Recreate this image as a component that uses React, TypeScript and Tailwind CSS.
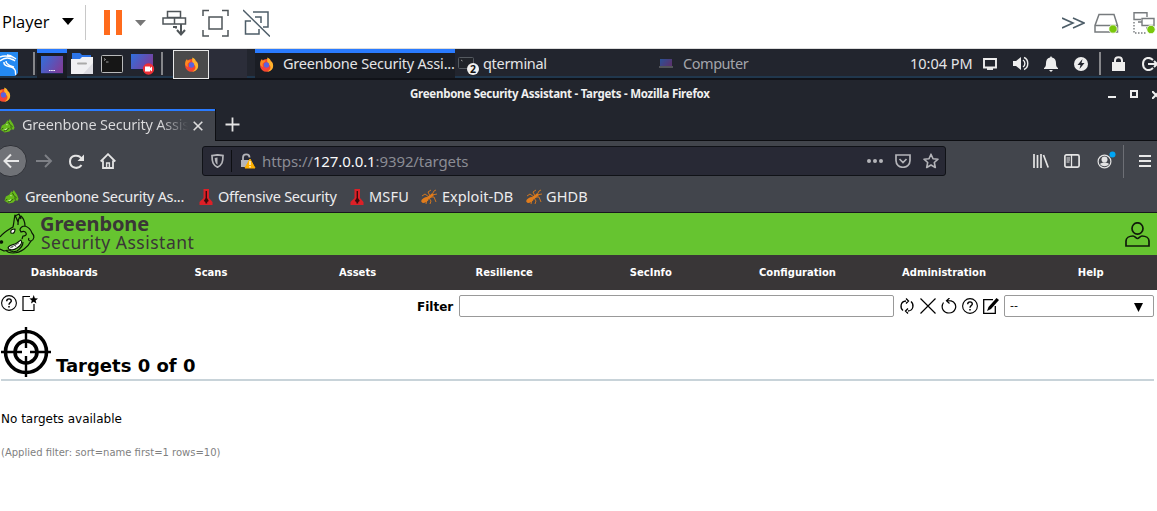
import type { ReactNode } from 'react';

type CellProps = { className: string; children?: ReactNode };

function Cell({ className, children }: CellProps) {
  return <div className={`flex shrink-0 items-center whitespace-nowrap ${className}`}>{children}</div>;
}

function Firefox({ className }: { className: string }) {
  return (
    <svg className={className} viewBox="0 0 16 16">
      <circle cx="8" cy="9" r="6.800" fill="#f4472f" />
      <path d="M9 .5c3 1.500 3.500 3 3.500 4 1.500.5 2.600 2.500 2.600 4.700 0 3.800-3 6.300-6.500 6.300 4-1.500 4.500-5 2.500-7C9.500 7 8 5 9 .5z" fill="#ffb32c" />
      <path d="M1.200 8C1 5 2 3 3.200 2c.1 1 .5 1.500 1 2 1-.5 2-.6 3 0L5 6c-1.500 1-1.500 3-.5 4.500C3 10.500 2 9.500 1.200 8z" fill="#ff8a1f" />
      <circle cx="8" cy="8.600" r="2.900" fill="#5a62e0" />
      <path d="M3.500 10c1.500 2 4 2.500 6 1.300L8 13c-2 .5-3.800-.8-4.500-3z" fill="#f23a5c" />
    </svg>
  );
}

function Dragon({ className }: { className: string }) {
  return (
    <svg className={className} viewBox="0 0 16 16">
      <path d="M.5 12.500L2 8l3.500-2L8 2.500l1 1L10.500 1l1.500 2.500 2 3 1.500 4-1 2-2.500-.5-2 2.500-5 1z" fill="#67bb1c" />
      <path d="M9 4l1.500 3 3 2.500M11.500 9l.5 2.500M4 14l3.500-1L10 10.500M1.500 12l2-1" stroke="#27420f" strokeWidth=".9" fill="none" />
      <path d="M6.500 6.500l1.800.5-.8 1zM3.500 12.500l2-.3 2-1.700-1 2.500z" fill="#e2f7cc" />
    </svg>
  );
}

function Dagger() {
  return (
    <svg className="h-4 w-[14px]" viewBox="0 0 14 16">
      <path d="M4.500 0h5.500v9l3.500 4v3H.5v-3l4-4z" fill="#dd2027" />
      <path d="M6.600 2h1.400v7l1.800 3-1.600 1v1.500H6.400V13l-1.600-1 1.800-3z" fill="#3b0b0d" />
    </svg>
  );
}

function Ant() {
  return (
    <svg className="h-4 w-4" viewBox="0 0 16 16">
      <g fill="#e07c1c">
        <ellipse cx="4" cy="11" rx="4" ry="2.400" transform="rotate(-30 4 11)" />
        <ellipse cx="8.500" cy="8" rx="2.700" ry="1.500" transform="rotate(-30 8.500 8)" />
        <circle cx="11" cy="6" r="1.600" />
      </g>
      <path d="M8 8L4 5 1 7M9 7L7 3l3-2M11 6l2-4 2-1M11 6l5-1M9 8l4 0 2 5M8 9l2 3-1 3M6 10l-1 5" stroke="#e07c1c" strokeWidth=".9" fill="none" />
    </svg>
  );
}

function Monitor({ className }: { className: string }) {
  return (
    <svg className={className} viewBox="0 0 22 18">
      <defs>
        <linearGradient id="screen" x1="0" y1="0" x2="1" y2=".5">
          <stop offset="0" stopColor="#2f70de" />
          <stop offset="1" stopColor="#7b3f9c" />
        </linearGradient>
      </defs>
      <rect width="22" height="18" fill="url(#screen)" />
      <path d="M0 17.500h22" stroke="#1c2a50" />
      <path d="M8 14.500h6" stroke="#fff" strokeWidth="1.200" strokeDasharray="1.500 .7" />
    </svg>
  );
}

function HelpMark() {
  return (
    <svg className="h-4 w-4 shrink-0" viewBox="0 0 16 16" fill="none" stroke="#000">
      <circle cx="8" cy="8" r="7.400" strokeWidth="1.100" />
      <path d="M5.700 6.200c0-3 4.600-3 4.600-.3 0 1.600-2.300 1.700-2.300 3.900" strokeWidth="1.400" />
      <path d="M8 11v1.500" strokeWidth="1.500" />
    </svg>
  );
}

function PlayerBar() {
  return (
    <div className="flex h-[49px] items-center border-b border-[#dcdcdc] bg-white pb-[3px] font-['Open_Sans',sans-serif]">
      <Cell className="w-[62px] pl-[2px] text-[16.500px] text-black">Player</Cell>
      <Cell className="w-[23px]">
        <svg className="mb-[3px] h-[7px] w-3" viewBox="0 0 12 7"><path d="M0 0h12L6 7z" /></svg>
      </Cell>
      <Cell className="w-[19px]"><div className="h-[35px] w-px bg-[#c8c8c8]" /></Cell>
      <Cell className="w-[31px] gap-[6px]">
        <div className="h-[25px] w-[6px] bg-[#ff6b1c]" />
        <div className="h-[25px] w-[6px] bg-[#ff6b1c]" />
      </Cell>
      <Cell className="w-[27px]">
        <svg className="h-[6px] w-[11px]" viewBox="0 0 11 6"><path d="M0 0h11L5.500 6z" fill="#777" /></svg>
      </Cell>
      <Cell className="w-10">
        <svg className="h-[26px] w-[26px]" viewBox="0 0 26 26" fill="none" stroke="#4f5559" strokeWidth="1.500">
          <path d="M5.500 1.500h13v6h-13zM1 8h22.500v6H1zM12.500 8v6" />
          <path d="M14 18.500v-1.500h-3M19 14v10M15 20l4 4.500 4-4.500" strokeWidth="2" />
        </svg>
      </Cell>
      <Cell className="w-[41px]">
        <svg className="h-[28px] w-[27px]" viewBox="0 0 27 28" fill="none" stroke="#4f5559" strokeWidth="1.500">
          <path d="M1 7V1.500h6M20 1.500h6V7M26 21v6h-6M7 27H1v-6" />
          <path d="M7 8h13v12H7z" />
        </svg>
      </Cell>
      <Cell className="w-[28px]">
        <svg className="h-[28px] w-[27px]" viewBox="0 0 27 28" fill="none" stroke="#4d5d68" strokeWidth="1.500">
          <path d="M10 3h15v15h-5M8 12H2.500v13H16v-5M12 8h6v6" />
          <path d="M0 1l27 26.500" />
        </svg>
      </Cell>
      <Cell className="ml-auto w-[32px]">
        <svg className="h-[12px] w-[23px]" viewBox="0 0 23 12" fill="none" stroke="#4d5d68" strokeWidth="1.600">
          <path d="M0 1l11 5-11 5M11 1l11 5-11 5" />
        </svg>
      </Cell>
      <Cell className="w-[39px]">
        <svg className="h-[22px] w-[25px]" viewBox="0 0 25 22" fill="none" stroke="#777b7e" strokeWidth="1.500">
          <path d="M5 2.500h15l3.500 11V20H1v-6.500zM1 13.500h22" />
          <circle cx="19" cy="17" r="4.200" fill="#7ac70c" stroke="#fff" strokeWidth=".8" />
        </svg>
      </Cell>
      <Cell className="w-[24px]">
        <svg className="h-[24px] w-[24px]" viewBox="0 0 24 24" fill="none" stroke="#777b7e" strokeWidth="1.400">
          <path d="M8 8.500H1V1.700h13V6M5 11h4" />
          <path d="M9 7.500h12v7H9zM13 17h5" fill="#fff" />
          <path d="M1 11v11h13" strokeDasharray="1.500 1.500" />
          <circle cx="18" cy="18.500" r="4.200" fill="#7ac70c" stroke="#fff" strokeWidth=".8" />
        </svg>
      </Cell>
    </div>
  );
}

function Panel() {
  return (
    <div className="flex h-[31px] border-b-2 border-[#101218] bg-[linear-gradient(#22252e_27px,#20374d_27px)] text-[#e4e4e6]">
      <Cell className="w-[33px]">
        <svg className="mt-[1px] h-[24px] w-[18px]" viewBox="0 0 18 24">
          <path d="M0 0h18v21l-3 3H0z" fill="#2389f2" />
          <path d="M0 5c4-2 8-1 13 0M0 9c5-4 10-3 13-1M7 3c4 0 6 2 9 4M4 10c-1 6 9 3 11 8 1 2 0 4 1 5M6 9c0 4 5 5 8 6M11 7c2 0 3 1 4 2" stroke="#fff" strokeWidth="1.400" fill="none" />
        </svg>
      </Cell>
      <Cell className="w-1"><div className="h-[23px] w-[1.500px] bg-[#85868a]" /></Cell>
      <Cell className="w-[30px] justify-center border-t-4 border-[#2a7bff] bg-[#1a1d24] pb-[1px]"><Monitor className="h-[18px] w-[22px]" /></Cell>
      <Cell className="w-[34px] pl-1">
        <svg className="h-[21px] w-[22px]" viewBox="0 0 22 21">
          <path d="M1 0h8l2 2h9v10H1z" fill="#2c74e8" />
          <path d="M0 6h9l2-2h11v17H0z" fill="#f0f0f3" />
          <path d="M12 21L22 10v11z" fill="#dcdce2" />
          <path d="M7 10.500h8" stroke="#aaa" strokeWidth="2" strokeLinecap="round" />
        </svg>
      </Cell>
      <Cell className="w-[30px]">
        <svg className="h-[18px] w-[22px]" viewBox="0 0 22 18">
          <rect x=".5" y=".5" width="21" height="17" rx="1" fill="#161616" stroke="#b9babb" />
          <path d="M3 3.500l1.500 1L3 5.500M5 7h2.500" stroke="#aaa" fill="none" strokeWidth=".9" />
        </svg>
      </Cell>
      <Cell className="w-[30px]">
        <svg className="mt-[2px] h-[21px] w-[24px]" viewBox="0 0 24 21">
          <rect width="22" height="16" fill="url(#screen)" />
          <path d="M0 15.500h22" stroke="#18233f" />
          <circle cx="17.500" cy="15" r="5.700" fill="#ed2f35" />
          <path d="M14 12.500h5v1.500l2-1.500v5l-2-1.500v1.500h-5z" fill="#fff" />
        </svg>
      </Cell>
      <Cell className="w-3"><div className="h-[23px] w-[1.500px] bg-[#85868a]" /></Cell>
      <Cell className="mt-px h-[29px] w-9 justify-center border border-[#e8e8e8] bg-[#4a4a4b]"><Firefox className="h-[15px] w-[15px]" /></Cell>
      <Cell className="w-[38px] bg-[#2b2d39]" />
      <Cell className="w-2" />
      <Cell className="w-[203px] bg-[linear-gradient(#1a1d24,#1a1d24)] bg-[length:200px_100%] bg-no-repeat">
        <div className="flex h-full w-[200px] items-center border-t-4 border-[#2a7bff] pb-[3px] pl-1">
          <Firefox className="h-[15px] w-[15px]" />
          <span className="ml-[9px] w-[172px] shrink-0 text-[14.500px] tracking-[-0.2px]">Greenbone Security Assi...</span>
        </div>
      </Cell>
      <Cell className="w-[25px]">
        <svg className="mt-[5px] h-[20px] w-[21px]" viewBox="0 0 21 20">
          <rect x=".5" y="1.500" width="15" height="11" rx="1" fill="#202329" stroke="#555a60" />
          <path d="M3 4l1.500 1" stroke="#999" />
          <circle cx="15" cy="13" r="6" fill="#f0f0f0" />
          <text x="15" y="16.800" textAnchor="middle" fontSize="10.500" fontWeight="700" fill="#111">2</text>
        </svg>
      </Cell>
      <Cell className="w-[176px] pt-px text-[14.500px] tracking-[-0.3px]">qterminal</Cell>
      <Cell className="w-[24px] opacity-60">
        <svg className="h-[9px] w-[14px]" viewBox="0 0 14 9"><path d="M1 0h12v7H1z" fill="url(#screen)" /><path d="M0 8h14" stroke="#aaa" strokeWidth="1.200" /></svg>
      </Cell>
      <Cell className="pt-px text-[14.500px] tracking-[-0.45px] text-[#a2a4aa]">Computer</Cell>
      <Cell className="ml-auto w-[73px] pt-px text-[14.500px]">10:04 PM</Cell>
      <Cell className="w-[30px]">
        <svg className="h-3 w-[14px]" viewBox="0 0 14 12" fill="none" stroke="#eee" strokeWidth="1.900"><path d="M1 1h12v8.500H1z" /><path d="M4 11h6" /></svg>
      </Cell>
      <Cell className="w-[31px]">
        <svg className="h-[15px] w-4" viewBox="0 0 16 15"><path d="M0 5h3l5-4v13L3 10H0z" fill="#eee" /><path d="M10 4c2.500 1.500 2.500 5.500 0 7M11 1.500c5 2 5 10 0 12" fill="none" stroke="#eee" strokeWidth="1.400" /></svg>
      </Cell>
      <Cell className="w-[30px]">
        <svg className="h-4 w-[14px]" viewBox="0 0 14 16" fill="#eee"><path d="M7 0l1 1.500c3 .5 4 3 4 5.500 0 3 .5 4 2 5v1H0v-1c1.500-1 2-2 2-5 0-2.500 1-5 4-5.500zM5 14h4l-2 2z" /></svg>
      </Cell>
      <Cell className="w-[25px]">
        <svg className="h-[14px] w-[14px]" viewBox="0 0 14 14"><circle cx="7" cy="7" r="7" fill="#eee" /><path d="M8.500 2L3.500 8h3l-1 4 5-6h-3z" fill="#22252e" /></svg>
      </Cell>
      <Cell className="w-[13px]"><div className="h-[23px] w-[1.500px] bg-[#85868a]" /></Cell>
      <Cell className="w-[30px]">
        <svg className="h-[15px] w-[13px]" viewBox="0 0 13 15"><path d="M0 6h13v9H0z" fill="#eee" /><path d="M3 7V4.500C3 0 10 0 10 4.500V7" fill="none" stroke="#eee" strokeWidth="2" /></svg>
      </Cell>
      <Cell className="w-[15px]">
        <svg className="h-[14px] w-[15px]" viewBox="0 0 15 14" fill="none" stroke="#eee" strokeWidth="2"><path d="M11 3C6-1.500 1 2 1 7s5 8.500 10 4M6 7h8" /><path d="M12 4l3 3-3 3" /></svg>
      </Cell>
    </div>
  );
}

function TitleBar() {
  return (
    <div className="flex h-[29px] items-center bg-[#22252d] text-[11.500px] font-bold text-[#f0f0f0]">
      <Cell className="w-[410px]"><Firefox className="-ml-1 h-[15px] w-[15px]" /></Cell>
      <Cell className="pb-px tracking-[-0.26px]">Greenbone Security Assistant - Targets - Mozilla Firefox</Cell>
      <Cell className="ml-auto w-[22px]"><div className="mt-[5px] h-[2px] w-2 bg-[#eee]" /></Cell>
      <Cell className="w-[22px]"><div className="mb-px h-2 w-2 border-2 border-[#eee]" /></Cell>
      <Cell className="w-[5px] overflow-hidden">
        <svg className="h-2 w-2 shrink-0" viewBox="0 0 8 8"><path d="M0 0l8 8M8 0L0 8" stroke="#eee" strokeWidth="2" /></svg>
      </Cell>
    </div>
  );
}

function TabStrip() {
  return (
    <div className="flex h-8 bg-[#22252d] text-[14.500px] text-[#dcdcde]">
      <div className="flex w-[215px] items-center border-t-2 border-[#2a7bff] bg-[#42454c] pb-[2px]">
        <Cell className="w-[22px]"><Dragon className="h-[15px] w-[15px]" /></Cell>
        <div className="w-[166px] shrink-0 overflow-hidden whitespace-nowrap bg-[linear-gradient(90deg,#dcdcde_138px,#42454c_166px)] bg-clip-text tracking-[-0.22px] text-transparent">Greenbone Security Assistant</div>
        <svg className="mt-px ml-[5px] h-[10px] w-[10px]" viewBox="0 0 10 10"><path d="M.7.7l8.600 8.600M9.300.7L.7 9.300" stroke="#ddd" strokeWidth="1.600" /></svg>
      </div>
      <div className="flex grow items-center border-b border-l border-[#0d0e12] pl-[9px]">
        <svg className="mb-[1px] h-[15px] w-[15px]" viewBox="0 0 15 15"><path d="M7.500.5v14M.5 7.500h14" stroke="#e4e4e4" strokeWidth="1.800" /></svg>
      </div>
    </div>
  );
}

function NavBar() {
  return (
    <div className="flex h-10 items-center bg-[#42454c]">
      <Cell className="w-9">
        <div className="-ml-[6px] flex h-8 w-[33px] shrink-0 items-center justify-center rounded-full border border-[#303238] bg-[#707277]">
          <svg className="ml-[2px] h-4 w-[17px]" viewBox="0 0 17 16" fill="none" stroke="#e8e8e8" strokeWidth="2"><path d="M16 8H2M8 1.500L1.500 8 8 14.500" /></svg>
        </div>
      </Cell>
      <Cell className="w-[33px]">
        <svg className="h-[14px] w-[17px]" viewBox="0 0 17 14" fill="none" stroke="#7e8086" strokeWidth="1.900"><path d="M0 7h15M9 1l6 6-6 6" /></svg>
      </Cell>
      <Cell className="w-[31px]">
        <svg className="h-[15px] w-[15px]" viewBox="0 0 15 15" fill="none" stroke="#e4e4e4" strokeWidth="2"><path d="M13 5.500C10-.5 1 1 1 7.500s8 8.500 11.500 3.500" /><path d="M15 .5V7H8.500z" fill="#e4e4e4" stroke="none" /></svg>
      </Cell>
      <Cell className="w-[102px]">
        <svg className="h-4 w-4" viewBox="0 0 16 16" fill="none" stroke="#e4e4e4" strokeWidth="1.800"><path d="M.7 8.500L8 1.200l7.300 7.300M3 7.500V15h10V7.500" /><path d="M6.600 15v-5h2.800v5" strokeWidth="1.400" /></svg>
      </Cell>
      <div className="flex h-[30px] w-[744px] items-center rounded-[3px] border border-[#101217] bg-[#282935]">
        <Cell className="w-7 pl-2">
          <svg className="h-[14px] w-[13px]" viewBox="0 0 13 14"><path d="M1 1.600L6.500.8l5.500.8C12 8 11 11 6.500 13.200 2 11 1 8 1 1.600z" fill="none" stroke="#b4b4b9" strokeWidth="1.700" /><path d="M6.500 3.500v7.300C4.500 9.500 3.800 7.500 3.700 4z" fill="#b4b4b9" /></svg>
        </Cell>
        <Cell className="h-[22px] w-[30px] border-l border-[#0d0e12] pl-2">
          <svg className="h-4 w-4 shrink-0" viewBox="0 0 16 16"><path d="M1 7h9v7H1z" fill="#b4b4b9" /><path d="M3 8V4.500C3 .3 9.500.3 9.500 4.500" stroke="#b4b4b9" strokeWidth="1.800" fill="none" /><path d="M10 6l5 9H5z" fill="#ffb000" stroke="#ffb000" strokeLinejoin="round" /><path d="M10 8v4M10 13v1.500" stroke="#fff" strokeWidth="1.200" /></svg>
        </Cell>
        <Cell className="pl-px text-[15px] tracking-[-0.1px] text-[#8b8c94]">https://<span className="text-[#f9f9fa]">127.0.0.1</span>:9392/targets</Cell>
        <Cell className="ml-auto w-[28px]">
          <svg className="h-1 w-4" viewBox="0 0 16 4" fill="#b4b4b9"><circle cx="2" cy="2" r="2" /><circle cx="8" cy="2" r="2" /><circle cx="14" cy="2" r="2" /></svg>
        </Cell>
        <Cell className="w-[28px]">
          <svg className="h-[14px] w-4" viewBox="0 0 16 14" fill="none" stroke="#b4b4b9" strokeWidth="1.700"><path d="M1 1h14v5.500c0 9-14 9-14 0zM4.500 5L8 8.500 11.500 5" /></svg>
        </Cell>
        <Cell className="w-[22px]">
          <svg className="h-4 w-4" viewBox="0 0 16 16"><path d="M8 1.200l2 4.500 5 .5-3.700 3.300 1 5L8 12l-4.300 2.500 1-5L1 6.200l5-.5z" fill="none" stroke="#b4b4b9" strokeWidth="1.600" strokeLinejoin="round" /></svg>
        </Cell>
      </div>
      <Cell className="ml-auto w-[31px]">
        <svg className="h-[14px] w-4" viewBox="0 0 16 14" stroke="#e4e4e4" strokeWidth="1.700"><path d="M1 0v14M4.500 1v13M8 0v14M10.500 1l4.700 12.500" /></svg>
      </Cell>
      <Cell className="w-[33px]">
        <svg className="h-[14px] w-4" viewBox="0 0 16 14" fill="none" stroke="#e4e4e4" strokeWidth="1.700"><rect x=".9" y=".9" width="14.200" height="12.200" rx="1.500" /><path d="M7.500 1v12" strokeWidth="1.300" /><path d="M2.500 4h3.500M2.500 6h3.500M2.500 8h3" strokeWidth="1" /></svg>
      </Cell>
      <Cell className="w-[26px]">
        <svg className="mb-[3px] h-[18px] w-[19px]" viewBox="0 0 19 18"><circle cx="7.500" cy="10.500" r="6.400" fill="none" stroke="#e4e4e4" strokeWidth="1.200" /><circle cx="7.500" cy="8.500" r="3" fill="#e4e4e4" /><path d="M3 13c2-2 7-2 9 0-2 3-7 3-9 0z" fill="#e4e4e4" /><circle cx="15.500" cy="3.500" r="3" fill="#00a6f5" /></svg>
      </Cell>
      <Cell className="w-[16px]"><div className="h-[33px] w-px bg-[#6d6f75]" /></Cell>
      <Cell className="w-[18px]">
        <svg className="h-3 w-3" viewBox="0 0 12 12" stroke="#e8e8e8" strokeWidth="1.900"><path d="M0 1h12M0 6h12M0 11h12" /></svg>
      </Cell>
    </div>
  );
}

function Bookmarks() {
  return (
    <div className="flex h-8 items-center border-b border-[#17181d] bg-[#42454c] text-[14.500px] text-[#ececee]">
      <Cell className="w-[25px] pl-1"><Dragon className="h-[15px] w-[15px]" /></Cell>
      <Cell className="w-[174px] tracking-[-0.3px]">Greenbone Security As...</Cell>
      <Cell className="w-[19px]"><Dagger /></Cell>
      <Cell className="w-[132px] tracking-[-0.23px]">Offensive Security</Cell>
      <Cell className="w-[19px]"><Dagger /></Cell>
      <Cell className="w-[52px] tracking-[0.2px]">MSFU</Cell>
      <Cell className="w-[21px]"><Ant /></Cell>
      <Cell className="w-[84px] tracking-[0.05px]">Exploit-DB</Cell>
      <Cell className="w-[20px]"><Ant /></Cell>
      <Cell className="tracking-[0.1px]">GHDB</Cell>
    </div>
  );
}

function Brand() {
  return (
    <div className="flex h-[42px] items-center bg-[#66c430] text-[#3a3637]">
      <Cell className="w-10">
        <svg className="h-[42px] w-[36px]" viewBox="0 0 36 42" fill="none" stroke="#0b1706" strokeWidth="1.200" strokeLinejoin="round">
          <path d="M0 24c4-5 8-7 13-10 1-4 1-8 2-12l3 7M15 3l4-2 2 5M18 12c0-4 0-7 3-9 3 3 4 7 4 10 3 1 6 4 7 7 3 3 2 7-1 8-2 0-3-1-2-3M25 13c-3 0-5 2-5 4l1 2c2-1 4-1 5 1s-1 3-3 3l-1 3" />
          <path d="M0 36l4 2 5-1M9 36c1 3 5 3 8 2 3-2 6-5 6-9M31 28c-3 6-10 12-18 12-3 0-6-1-7-3" />
          <path d="M11 20c-1-3 1-4 4-4 0 3-1 5-4 4z" fill="#fff" />
          <path d="M8 35c1-3 4-3 7-4s4-3 6-4c2 3-1 6-4 8s-7 3-9 0z" fill="#fff" />
          <path d="M10 35l9-5M12 33v2M15 32l1 2" strokeWidth=".6" />
          <circle cx="1.500" cy="29" r="1.200" fill="#0b1706" />
        </svg>
      </Cell>
      <div className="flex h-full flex-col whitespace-nowrap font-['Noto_Sans',sans-serif]">
        <div className="h-[21px] text-[20px] leading-[21px] font-bold tracking-[-0.1px]">Greenbone</div>
        <div className="h-[21px] pl-px text-[17.500px] leading-[16px] tracking-[0.5px]">Security Assistant</div>
      </div>
      <svg className="mr-[7px] ml-auto h-[25px] w-[25px]" viewBox="0 0 25 25" fill="none" stroke="#101a0a" strokeWidth="1.700">
        <ellipse cx="12.500" cy="6.500" rx="5.500" ry="5.700" />
        <path d="M1 24v-5c0-3 3-5 7-5 2 0 3 2.500 4.500 2.500S15 14 17 14c4 0 7 2 7 5v5z" />
      </svg>
    </div>
  );
}

const sections = ['Dashboards', 'Scans', 'Assets', 'Resilience', 'SecInfo', 'Configuration', 'Administration', 'Help'];

function Menu() {
  return (
    <nav className="-ml-[9px] grid h-[35px] w-[1173px] grid-cols-8 items-center bg-[#393637] text-center font-['DejaVu_Sans',sans-serif] text-[10px] font-bold text-white">
      {sections.map((name) => <span key={name}>{name}</span>)}
    </nav>
  );
}

function FilterRow() {
  return (
    <div className="flex h-[32px] items-center">
      <Cell className="mb-[6px] w-[21px] pl-px"><HelpMark /></Cell>
      <Cell className="mb-[6px] w-5 pl-px">
        <svg className="h-4 w-4" viewBox="0 0 16 16"><path d="M8 1.500H1v14h11V9" fill="none" stroke="#000" strokeWidth="1.200" /><path d="M11.700 0l1.200 3.200 3.100.2-2.400 2 .8 3.100-2.700-1.700L9 8.500l.8-3.100-2.400-2 3.100-.2z" /></svg>
      </Cell>
      <Cell className="mt-[2px] ml-auto w-[42px] text-[12px] font-bold">Filter</Cell>
      <div className="h-[22px] w-[435px] rounded-[2px] border border-[#999] bg-white" />
      <div className="ml-[5px] flex w-[105px] items-center gap-[5px]">
        <svg className="h-4 w-4 shrink-0" viewBox="0 0 16 16" fill="none" stroke="#000" strokeWidth="1.300"><path d="M7 3C1 3.500 1 10 4 12.500M9 13c6-.5 6-7 3-9.500M7 .5L9.500 3 7 5.500M9 10.500L6.500 13 9 15.500" /></svg>
        <svg className="h-4 w-4 shrink-0" viewBox="0 0 16 16" stroke="#000" strokeWidth="1.200"><path d="M.5.5l15 15M15.500.5l-15 15" /></svg>
        <svg className="h-4 w-4 shrink-0" viewBox="0 0 16 16" fill="none" stroke="#000" strokeWidth="1.200"><path d="M2.500 4.500C-1 10 3 15 8 15c6 0 9-7 4.500-11C11 3 9 2.500 6 2.700M8.500 0L5.500 2.700l3 2.800" /></svg>
        <HelpMark />
        <svg className="h-4 w-4 shrink-0" viewBox="0 0 16 16"><path d="M10 1.600H.7v13.700h11.600V8" fill="none" stroke="#000" strokeWidth="1.300" /><path d="M13.500 0L16 2 8 11l-4 2 1.500-4z" /></svg>
      </div>
      <div className="flex h-[22px] w-[150px] items-center justify-between rounded-[2px] border border-[#999] pr-[10px] pl-[5px] text-[11px]">
        <span className="pt-px">--</span>
        <svg className="mt-[2px] h-[9px] w-[9px]" viewBox="0 0 9 9"><path d="M0 0h9L4.500 9z" /></svg>
      </div>
    </div>
  );
}

export default function App() {
  return (
    <div className="flex h-[511px] w-[1157px] flex-col overflow-hidden bg-white font-['Noto_Sans',sans-serif]">
      <PlayerBar />
      <Panel />
      <TitleBar />
      <TabStrip />
      <NavBar />
      <Bookmarks />
      <Brand />
      <Menu />
      <main className="flex grow flex-col pr-[3px] font-['DejaVu_Sans',sans-serif] text-black">
        <FilterRow />
        <div className="ml-px flex h-[59px] items-end border-b-2 border-[#c8d3d9] pb-[2px]">
          <svg className="h-[50px] w-[50px]" viewBox="0 0 50 50" fill="none" stroke="#000">
            <circle cx="25" cy="25" r="20.500" strokeWidth="3.600" />
            <circle cx="25" cy="25" r="11" strokeWidth="3.600" />
            <path d="M25 0v21M25 29v21M0 25h21M29 25h21" strokeWidth="2.400" />
          </svg>
          <h1 className="ml-[5px] text-[18px] leading-[22px] font-bold">Targets 0 of 0</h1>
        </div>
        <p className="mt-[30px] ml-px text-[12px] leading-4">No targets available</p>
        <p className="mt-[19px] ml-px text-[10px] leading-[13px] text-[#7f7f7f]">(Applied filter: sort=name first=1 rows=10)</p>
      </main>
    </div>
  );
}
